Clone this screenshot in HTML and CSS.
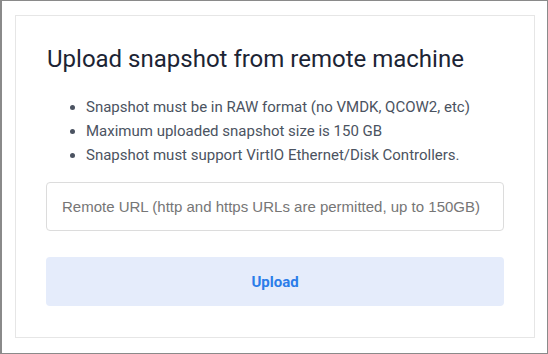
FILE: index.html
```html
<!DOCTYPE html>
<html lang="en">
<head>
    <meta charset="UTF-8">
    <meta name="viewport" content="width=device-width, initial-scale=1.0">
    <title>Upload snapshot</title>
    <link rel="stylesheet" href="styles.css">
</head>
<body>
    <div class="card">
        <h2 class="title">Upload snapshot from remote machine</h2>
        <ul class="rules">
            <li>Snapshot must be in RAW format (no VMDK, QCOW2, etc)</li>
            <li>Maximum uploaded snapshot size is 150 GB</li>
            <li>Snapshot must support VirtIO Ethernet/Disk Controllers.</li>
        </ul>
        <input class="url" type="text" placeholder="Remote URL (http and https URLs are permitted, up to 150GB)">
        <button class="upload" type="button">Upload</button>
    </div>
</body>
</html>
```

FILE: styles.css
```css
html, body {
    margin: 0;
    height: 100%;
}
body {
    box-sizing: border-box;
    border: 1px solid #8a8a8a;
    border-left-width: 2px;
    background-color: #fff;
    font-family: Roboto, "Liberation Sans", sans-serif;
    padding: 14px 0 0 13px;
}
.card {
    box-sizing: border-box;
    width: 520px;
    height: 323px;
    border: 1px solid #e6e6e6;
    padding: 0 30px;
    display: flex;
    flex-direction: column;
}
.title {
    margin: 28px 0 0 1px;
    font-size: 24px;
    font-weight: 400;
    line-height: 30px;
    color: #1c2434;
}
.rules {
    margin: 21px 0 0;
    padding-left: 40px;
    font-size: 15px;
    line-height: 24px;
    color: #4b5361;
}
.url {
    box-sizing: border-box;
    margin-top: 15px;
    height: 49px;
    border: 1px solid #dcdcdc;
    border-radius: 4px;
    padding: 0 15px;
    font-family: "Liberation Sans", Arial, sans-serif;
    font-size: 15px;
    outline: none;
}
.url::placeholder {
    color: #767676;
}
.upload {
    margin-top: 26px;
    height: 49px;
    border: 0;
    border-radius: 4px;
    background-color: #e5ecfb;
    color: #2b7de9;
    font-family: Roboto, sans-serif;
    font-size: 15px;
    font-weight: 700;
    cursor: pointer;
}
```
